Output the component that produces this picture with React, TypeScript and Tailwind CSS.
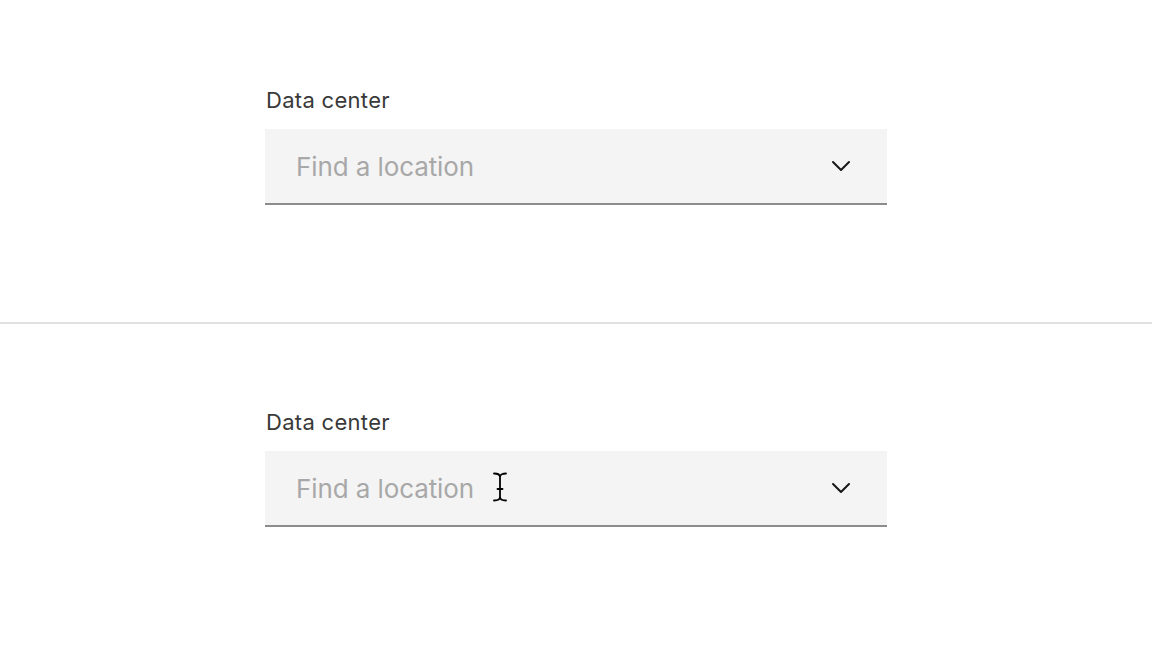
import { ChevronDown } from 'lucide-react'

function TextCursor() {
  return (
    <svg
      width="16"
      height="30"
      viewBox="0 0 16 30"
      className="pointer-events-none absolute left-[227px] top-[21px]"
      fill="none"
      stroke="#000"
      strokeWidth="1.8"
      strokeLinecap="round"
    >
      <path d="M2 1.5 C5 1.5 8 2.5 8 5 C8 2.5 11 1.5 14 1.5" />
      <path d="M8 5 L8 25" />
      <path d="M5.5 17 L10.5 17" />
      <path d="M2 28.5 C5 28.5 8 27.5 8 25 C8 27.5 11 28.5 14 28.5" />
    </svg>
  )
}

function LocationField({ showCursor }: { showCursor?: boolean }) {
  return (
    <div className="w-[622px]">
      <label className="block pl-px text-[22px] leading-[28px] tracking-[0.3px] text-[#393939]">Data center</label>
      <div className="relative mt-[15px] flex h-[76px] items-center border-b-2 border-[#8d8d8d] bg-[#f4f4f4]">
        <input
          type="text"
          placeholder="Find a location"
          className="h-full min-w-0 flex-1 bg-transparent pl-[31px] text-[26px] tracking-[-0.1px] text-[#161616] outline-none placeholder:text-[#a8a8a8]"
        />
        <ChevronDown size={32} strokeWidth={1.5} className="mr-[30px] shrink-0 text-[#161616]" />
        {showCursor && <TextCursor />}
      </div>
    </div>
  )
}

export default function App() {
  return (
    <div className="min-h-screen bg-white font-['Inter','Noto_Sans',sans-serif]">
      <section className="flex h-[322px] justify-center pt-[86px]">
        <LocationField />
      </section>
      <div className="h-[2px] bg-[#e0e0e0]" />
      <section className="flex h-[324px] justify-center pt-[84px]">
        <LocationField showCursor />
      </section>
    </div>
  )
}
